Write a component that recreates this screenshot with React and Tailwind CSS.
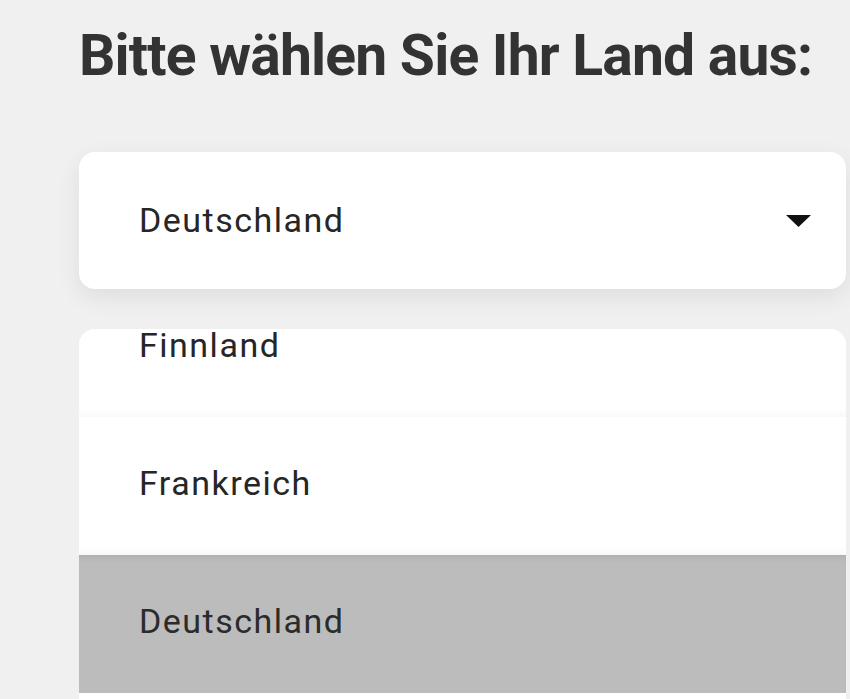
function Row({ label, active }) {
    return (
        <div
            className={
                active
                    ? "h-[138px] flex items-center pl-[60px] pb-[6px] bg-[#bcbcbc] shadow-[inset_0_6px_8px_-6px_rgba(0,0,0,0.12)] text-[#2b2b2b]"
                    : "h-[138px] flex items-center pl-[60px] pb-[6px] bg-white shadow-[inset_0_-12px_10px_-10px_rgba(0,0,0,0.04)] text-[#262626]"
            }
        >
            <span className="text-[34px] tracking-[1.5px]">{label}</span>
        </div>
    )
}

function App () {
    return (
        <div className="w-[850px] h-[699px] overflow-hidden bg-[#f0f0f0] pl-[79px] pr-[4px] font-['Roboto',_'Liberation_Sans',_sans-serif]">
            <h1 className="pt-[26px] text-[57px] leading-[60px] font-bold text-[#333] tracking-[-0.8px] whitespace-nowrap">
                Bitte wählen Sie Ihr Land aus:
            </h1>

            <div className="mt-[66px] h-[137px] bg-white rounded-[16px] shadow-[0_8px_24px_rgba(0,0,0,0.08)] flex items-center justify-between pl-[60px] pr-[35px]">
                <span className="text-[34px] text-[#262626] tracking-[1.5px]">Deutschland</span>
                <svg width="25" height="12" viewBox="0 0 25 12">
                    <polygon points="0,0 25,0 12.5,12" fill="#111" />
                </svg>
            </div>

            <div className="mt-[40px] h-[400px] bg-white rounded-t-[16px] overflow-hidden">
                <div className="-mt-[50px]">
                    <Row label="Finnland" />
                    <Row label="Frankreich" />
                    <Row label="Deutschland" active />
                    <Row label="" />
                </div>
            </div>
        </div>
    )
}

export default App;
